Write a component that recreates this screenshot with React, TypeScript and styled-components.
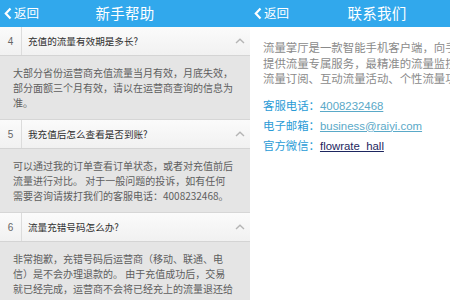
import React from 'react';
import styled, { createGlobalStyle } from 'styled-components';

const GlobalStyle = createGlobalStyle`
  html, body {
    margin: 0;
    padding: 0;
    background: #ffffff;
  }
  body {
    font-family: 'Noto Sans CJK SC', 'Noto Sans', sans-serif;
  }
`;

const Screen = styled.div`
  width: 450px;
  height: 300px;
  display: flex;
  overflow: hidden;
  background: #ffffff;
`;

const Phone = styled.div<{ $width: number; $bg: string }>`
  width: ${(p) => p.$width}px;
  flex-shrink: 0;
  height: 300px;
  display: flex;
  flex-direction: column;
  background: ${(p) => p.$bg};
  overflow: hidden;
`;

const Header = styled.div`
  height: 27px;
  flex-shrink: 0;
  background: #31a8ec;
  display: grid;
  grid-template-columns: 1fr auto 1fr;
  align-items: center;
  color: #ffffff;
`;

const Back = styled.div`
  display: flex;
  align-items: center;
  gap: 2px;
  padding-left: 4px;
  font-size: 12.5px;
  line-height: 1;
  svg {
    display: block;
  }
`;

const Title = styled.div`
  font-size: 14.5px;
  letter-spacing: 0.2px;
  line-height: 1;
`;

const QuestionRow = styled.div`
  height: 28px;
  flex-shrink: 0;
  display: flex;
  align-items: center;
  background: linear-gradient(#fbfbfb, #f1f1f1);
  border-bottom: 1px solid #d4d4d4;
`;

const Num = styled.div`
  width: 21px;
  height: 100%;
  display: flex;
  align-items: center;
  justify-content: center;
  border-right: 1px solid #dcdcdc;
  font-family: 'Liberation Sans', 'Noto Sans', sans-serif;
  font-size: 10px;
  color: #666666;
`;

const Question = styled.div`
  flex: 1;
  padding-left: 6px;
  font-size: 9.6px;
  color: #2e2e2e;
  white-space: nowrap;
`;

const Chevron = styled.div`
  width: 20px;
  display: flex;
  justify-content: center;
  svg {
    display: block;
  }
`;

const Answer = styled.div`
  flex-shrink: 0;
  height: 64px;
  box-sizing: border-box;
  padding: 9px 0 0 13px;
  background: #e5e5e5;
  border-bottom: 1px solid #d6d6d6;
  font-size: 10px;
  line-height: 15px;
  color: #5e5e5e;
  white-space: nowrap;
`;

const Body = styled.div`
  padding: 13px 0 0 13px;
  font-size: 11.4px;
  white-space: nowrap;
`;

const Intro = styled.p`
  margin: 0;
  line-height: 15.5px;
  color: #8a8a8a;
`;

const Contacts = styled.div`
  margin-top: 9px;
  display: flex;
  flex-direction: column;
`;

const ContactLine = styled.div`
  line-height: 19px;
  color: #2a9bd6;
`;

const Link = styled.a<{ $color: string }>`
  font-family: 'Liberation Sans', 'Noto Sans', sans-serif;
  color: ${(p) => p.$color};
  text-decoration: underline;
`;

const BackArrow = () => (
  <svg width="8" height="13" viewBox="0 0 8 13">
    <polyline points="6.5,1.5 1.8,6.5 6.5,11.5" fill="none" stroke="#ffffff" strokeWidth="2.2" />
  </svg>
);

const UpIcon = () => (
  <svg width="10" height="6" viewBox="0 0 10 6">
    <polyline points="1,5 5,1.2 9,5" fill="none" stroke="#b5b5b5" strokeWidth="1.4" />
  </svg>
);

const faqs = [
  {
    n: '4',
    q: '充值的流量有效期是多长?',
    a: ['大部分省份运营商充值流量当月有效，月底失效，', '部分面额三个月有效，请以在运营商查询的信息为', '准。'],
  },
  {
    n: '5',
    q: '我充值后怎么查看是否到账?',
    a: ['可以通过我的订单查看订单状态，或者对充值前后', '流量进行对比。 对于一般问题的投诉，如有任何', '需要咨询请拨打我们的客服电话：4008232468。'],
  },
  {
    n: '6',
    q: '流量充错号码怎么办?',
    a: ['非常抱歉，充错号码后运营商（移动、联通、电', '信）是不会办理退款的。 由于充值成功后，交易', '就已经完成，运营商不会将已经充上的流量退还给'],
  },
];

const NavBar = ({ title }: { title: string }) => (
  <Header>
    <Back>
      <BackArrow />
      <span>返回</span>
    </Back>
    <Title>{title}</Title>
    <div />
  </Header>
);

export default function App() {
  return (
    <>
      <GlobalStyle />
      <Screen>
        <Phone $width={250} $bg="#e5e5e5">
          <NavBar title="新手帮助" />
          {faqs.map((f) => (
            <React.Fragment key={f.n}>
              <QuestionRow>
                <Num>{f.n}</Num>
                <Question>{f.q}</Question>
                <Chevron>
                  <UpIcon />
                </Chevron>
              </QuestionRow>
              <Answer>
                {f.a.map((line, i) => (
                  <div key={i}>{line}</div>
                ))}
              </Answer>
            </React.Fragment>
          ))}
        </Phone>
        <Phone $width={254} $bg="#ffffff">
          <NavBar title="联系我们" />
          <Body>
            <Intro>
              流量掌厅是一款智能手机客户端，向手机用户
              <br />
              提供流量专属服务，最精准的流量监控、
              <br />
              流量订阅、互动流量活动、个性流量功能
            </Intro>
            <Contacts>
              <ContactLine>
                客服电话：<Link $color="#5aa9c8">4008232468</Link>
              </ContactLine>
              <ContactLine>
                电子邮箱：<Link $color="#5aa9c8">business@raiyi.com</Link>
              </ContactLine>
              <ContactLine>
                官方微信：<Link $color="#1d2660">flowrate_hall</Link>
              </ContactLine>
            </Contacts>
          </Body>
        </Phone>
      </Screen>
    </>
  );
}
